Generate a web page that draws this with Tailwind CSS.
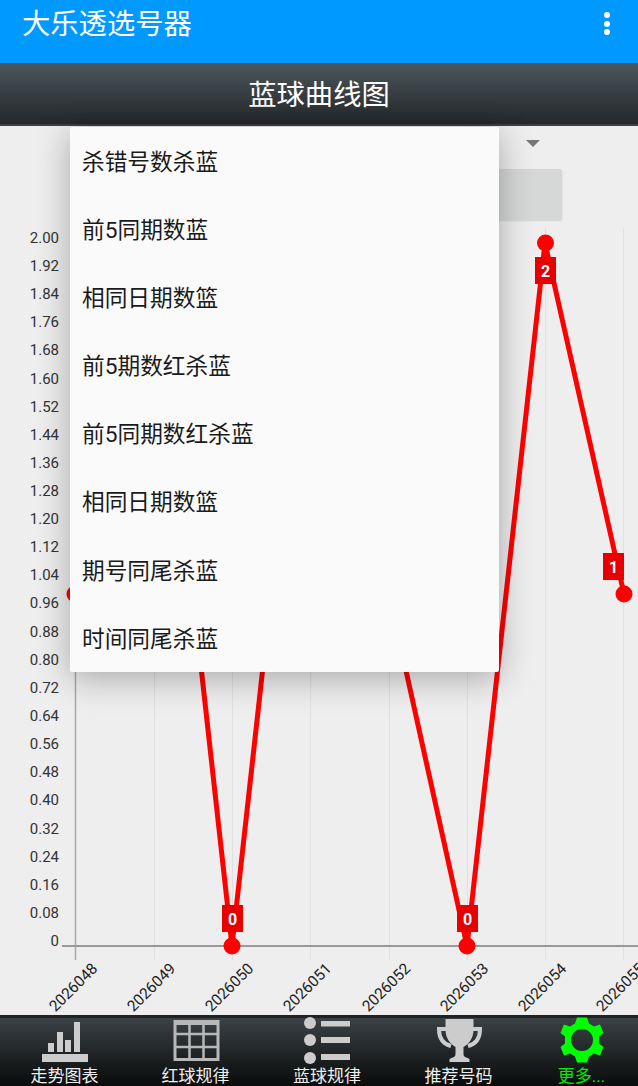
<!DOCTYPE html>
<html lang="zh">
<head>
<meta charset="utf-8">
<script src="https://cdn.jsdelivr.net/npm/@tailwindcss/browser@4"></script>
<title>大乐透选号器</title>
</head>
<body class="m-0 overflow-hidden bg-[#eeeeee]">
<div class="flex h-[1086px] w-[638px] flex-col overflow-hidden font-[Roboto,'Noto_Sans_CJK_SC',sans-serif]">
  <header class="flex h-[63px] shrink-0 items-start justify-between bg-[#0099ff] pl-[22px] pr-[28px] text-white">
    <h1 class="mt-[5px] text-[28.3px] leading-[40px] font-normal">大乐透选号器</h1>
    <div class="mt-[12px] flex flex-col gap-[2.5px]">
      <span class="size-[6px] rounded-full bg-white"></span>
      <span class="size-[6px] rounded-full bg-white"></span>
      <span class="size-[6px] rounded-full bg-white"></span>
    </div>
  </header>
  <div class="flex h-[63px] shrink-0 items-center justify-center border-b-2 border-[#3c3e3f] bg-gradient-to-b from-[#4b565c] to-[#25282a] pt-[5px] text-[28.3px] text-white">蓝球曲线图</div>
  <main class="relative min-h-0 flex-1 bg-[#eeeeee]">
    <div class="absolute left-[526px] top-[14px] size-0 border-x-[7px] border-t-[7px] border-x-transparent border-t-[#777777]"></div>
    <div class="absolute left-[420px] top-[43px] h-[51px] w-[142px] rounded-[2px] bg-[#d6d8d8] shadow-[0_1px_2px_rgba(0,0,0,0.12)]"></div>
    <svg class="absolute left-0 top-0" width="638" height="889" viewBox="0 126 638 889" xmlns="http://www.w3.org/2000/svg">
      <g stroke="#e0e0e0" stroke-width="1">
        <line x1="154.5" y1="228" x2="154.5" y2="960"/>
        <line x1="232.5" y1="228" x2="232.5" y2="960"/>
        <line x1="310.5" y1="228" x2="310.5" y2="960"/>
        <line x1="389.5" y1="228" x2="389.5" y2="960"/>
        <line x1="467.5" y1="228" x2="467.5" y2="960"/>
        <line x1="545.5" y1="228" x2="545.5" y2="960"/>
        <line x1="623.5" y1="228" x2="623.5" y2="960"/>
      </g>
      <line x1="75.5" y1="228" x2="75.5" y2="960" stroke="#a8a8a8" stroke-width="1.5"/>
      <line x1="62" y1="946" x2="638" y2="946" stroke="#999999" stroke-width="2"/>
      <g font-size="15" fill="#333333" text-anchor="end">
        <text x="59" y="243">2.00</text><text x="59" y="271">1.92</text><text x="59" y="299">1.84</text>
        <text x="59" y="327">1.76</text><text x="59" y="355">1.68</text><text x="59" y="384">1.60</text>
        <text x="59" y="412">1.52</text><text x="59" y="440">1.44</text><text x="59" y="468">1.36</text>
        <text x="59" y="496">1.28</text><text x="59" y="524">1.20</text><text x="59" y="552">1.12</text>
        <text x="59" y="580">1.04</text><text x="59" y="608">0.96</text><text x="59" y="637">0.88</text>
        <text x="59" y="665">0.80</text><text x="59" y="693">0.72</text><text x="59" y="721">0.64</text>
        <text x="59" y="749">0.56</text><text x="59" y="777">0.48</text><text x="59" y="805">0.40</text>
        <text x="59" y="834">0.32</text><text x="59" y="862">0.24</text><text x="59" y="890">0.16</text>
        <text x="59" y="918">0.08</text><text x="59" y="946">0</text>
      </g>
      <g font-size="15.500" fill="#222222" text-anchor="end">
        <text transform="translate(98.500 969.500) rotate(-45)">2026048</text>
        <text transform="translate(176.500 969.500) rotate(-45)">2026049</text>
        <text transform="translate(254.500 969.500) rotate(-45)">2026050</text>
        <text transform="translate(332.500 969.500) rotate(-45)">2026051</text>
        <text transform="translate(411.500 969.500) rotate(-45)">2026052</text>
        <text transform="translate(489.500 969.500) rotate(-45)">2026053</text>
        <text transform="translate(567.500 969.500) rotate(-45)">2026054</text>
        <text transform="translate(645.500 969.500) rotate(-45)">2026055</text>
      </g>
      <polyline points="75,594 154,243 232,946 310,243 389,594 467,946 545,243 624,594" fill="none" stroke="#ff0000" stroke-width="5" stroke-linejoin="round"/>
      <g fill="#ff0000">
        <circle cx="75" cy="594" r="8.5"/><circle cx="232" cy="946" r="8.5"/>
        <circle cx="467" cy="946" r="8.5"/><circle cx="545.5" cy="243" r="8.5"/><circle cx="624" cy="594" r="8.5"/>
      </g>
      <g fill="#e60000">
        <rect x="222" y="905" width="21" height="27"/><rect x="457" y="905" width="21" height="27"/>
        <rect x="535" y="257" width="21" height="27"/><rect x="603" y="553" width="21" height="27"/>
      </g>
      <g font-size="16" font-weight="700" fill="#ffffff" text-anchor="middle">
        <text x="232.5" y="925">0</text><text x="467.5" y="925">0</text>
        <text x="545.5" y="277">2</text><text x="613.5" y="573">1</text>
      </g>
    </svg>
    <ul class="absolute left-[70px] top-[1px] h-[545px] w-[429px] rounded-[2px] bg-[#fafafa] pt-[2px] shadow-[0_6px_34px_rgba(0,0,0,0.3)] text-[22.7px] leading-[68.1px] text-[#1a1a1a]">
      <li class="pl-[12px]">杀错号数杀蓝</li>
      <li class="pl-[12px]">前5同期数蓝</li>
      <li class="pl-[12px]">相同日期数篮</li>
      <li class="pl-[12px]">前5期数红杀蓝</li>
      <li class="pl-[12px]">前5同期数红杀蓝</li>
      <li class="pl-[12px]">相同日期数篮</li>
      <li class="pl-[12px]">期号同尾杀蓝</li>
      <li class="pl-[12px]">时间同尾杀蓝</li>
    </ul>
  </main>
  <nav class="grid h-[71px] shrink-0 grid-cols-[129px_133px_130px_133px_113px] border-t-[3px] border-[#1f2223] bg-gradient-to-b from-[#3b4246] to-[#0a0c0c] text-[17px] leading-[20px] text-[#eeeeee]">
    <div class="flex flex-col items-center">
      <svg class="mt-[1px] block h-[46px] w-[48px] overflow-visible" viewBox="0 0 48 46" fill="#cccccc" xmlns="http://www.w3.org/2000/svg">
        <rect x="1" y="35" width="46" height="8"/>
        <rect x="7" y="24" width="6" height="9"/><rect x="16" y="13" width="6" height="20"/>
        <rect x="24" y="21" width="6" height="12"/><rect x="33" y="3" width="6" height="30"/>
      </svg>
      <span class="mt-[1px]">走势图表</span>
    </div>
    <div class="flex flex-col items-center">
      <svg class="mt-[1px] block h-[46px] w-[48px] overflow-visible" viewBox="0 0 48 46" fill="none" stroke="#b8b8b8" xmlns="http://www.w3.org/2000/svg">
        <rect x="3" y="2.5" width="43" height="38" stroke-width="3"/>
        <path d="M17.5 2v40M31.5 2v40M2 15h45M2 28h45" stroke-width="2.5"/>
        <path d="M2 3.5h45" stroke-width="5"/>
      </svg>
      <span class="mt-[1px]">红球规律</span>
    </div>
    <div class="flex flex-col items-center">
      <svg class="mt-[1px] block h-[46px] w-[48px] overflow-visible" viewBox="0 0 48 46" fill="#cccccc" xmlns="http://www.w3.org/2000/svg">
        <circle cx="7" cy="4" r="6"/><circle cx="7" cy="21" r="6"/><circle cx="7" cy="39" r="6"/>
        <rect x="18" y="2" width="29" height="5.5"/><rect x="18" y="18" width="29" height="6"/><rect x="18" y="35" width="29" height="6"/>
      </svg>
      <span class="mt-[1px]">蓝球规律</span>
    </div>
    <div class="flex flex-col items-center">
      <svg class="mt-[1px] block h-[46px] w-[48px] overflow-visible" viewBox="0 0 48 46" xmlns="http://www.w3.org/2000/svg">
        <path d="M11 10H4c0 9 4 15 12 17" fill="none" stroke="#cccccc" stroke-width="4"/>
        <path d="M38 10h7c0 9-4 15-12 17" fill="none" stroke="#cccccc" stroke-width="4"/>
        <path d="M10.500 0h28v11c0 9-6 15-10 17v7c0 3 2 3 6 5v3h-20v-3c4-2 6-2 6-5v-7c-4-2-10-8-10-17z" fill="#cccccc"/>
      </svg>
      <span class="mt-[1px]">推荐号码</span>
    </div>
    <div class="flex flex-col items-center text-[#00ee00]">
      <svg class="mt-[1px] block h-[46px] w-[48px] overflow-visible" viewBox="0 0 48 46" xmlns="http://www.w3.org/2000/svg">
        <path fill="#00ff00" fill-rule="evenodd" d="M19 -1.500H29L31 4.500 36 7.500 42 5.500 45.500 14 41 17.500V24.500L45.500 28 42 36.500 36 34.500 31 37.500 29 43.500H19L17 37.500 12 34.500 6 36.500 2.500 28 7 24.500V17.500L2.500 14 6 5.500 12 7.500 17 4.500ZM24 10a11 11 0 1 0 0 22 11 11 0 0 0 0-22Z"/>
      </svg>
      <span class="mt-[1px]">更多...</span>
    </div>
  </nav>
</div>
</body>
</html>
